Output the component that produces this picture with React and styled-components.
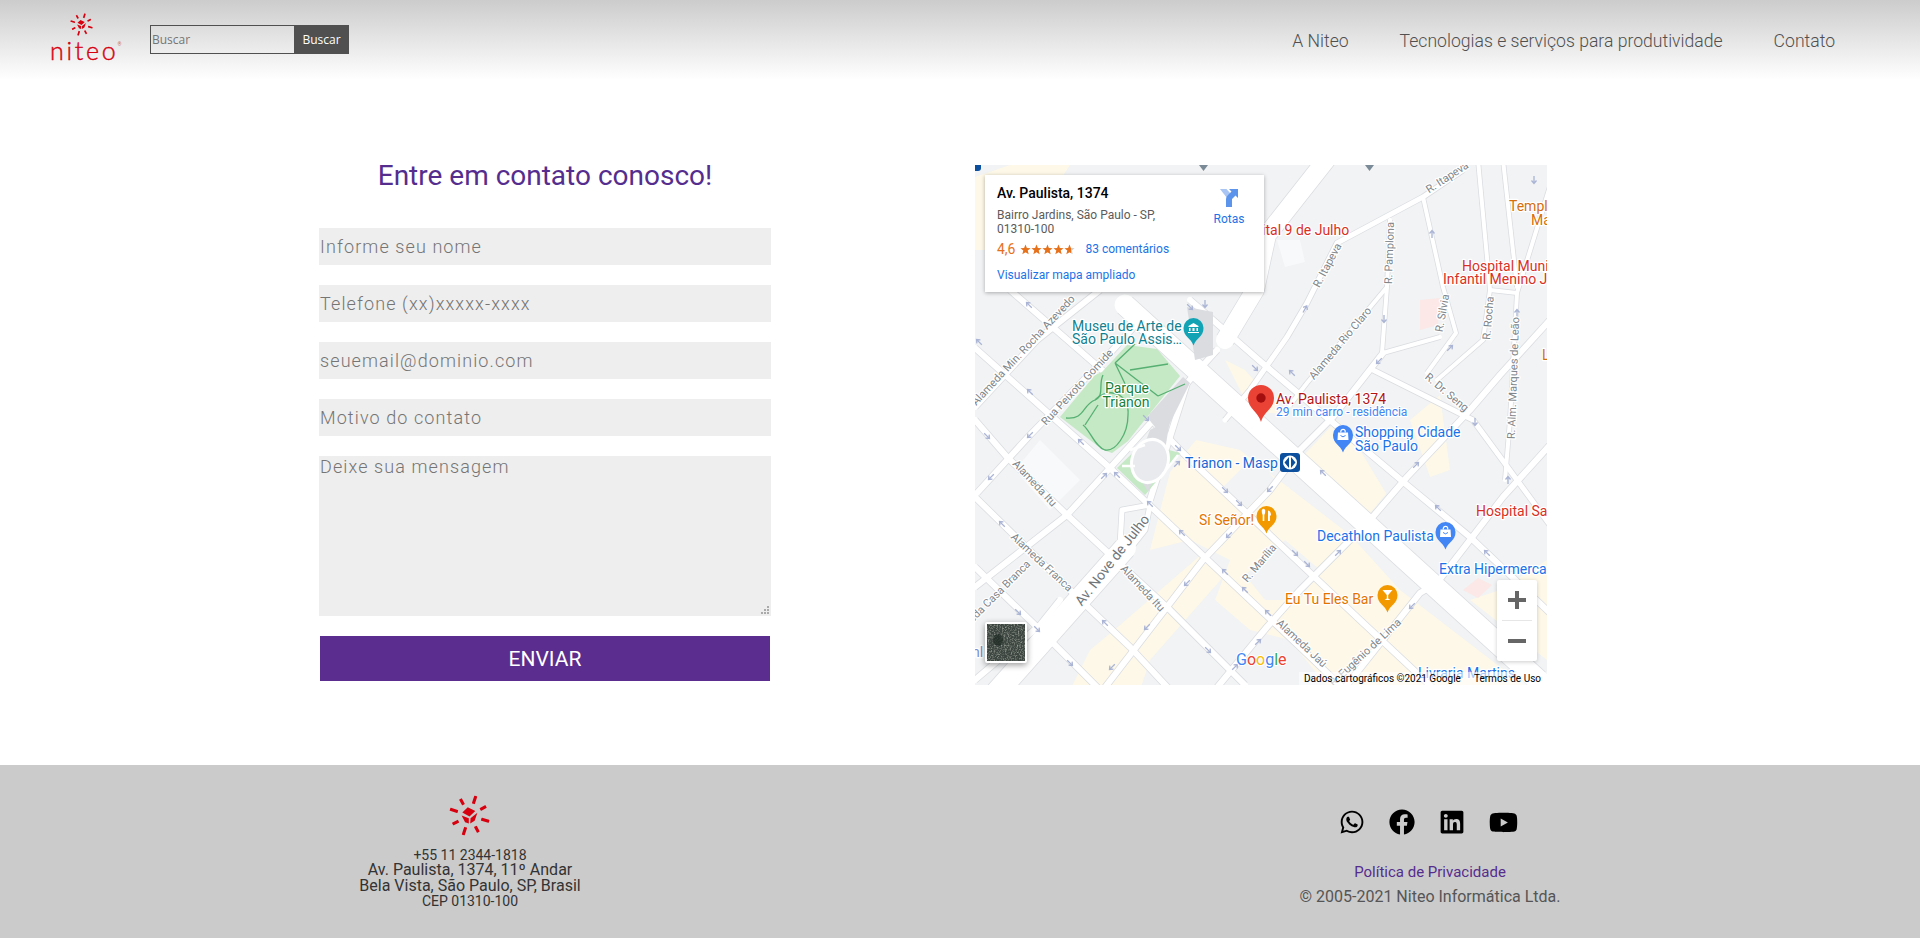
import React from "react";
import styled, { createGlobalStyle } from "styled-components";
import { FaWhatsapp, FaFacebook, FaLinkedin, FaYoutube } from "react-icons/fa";

const GlobalStyle = createGlobalStyle`
  html, body { margin: 0; padding: 0; background: #fff; }
  body { font-family: Roboto, "Liberation Sans", sans-serif; overflow: hidden; }
  * { box-sizing: border-box; }
`;

const Header = styled.header`
  height: 80px;
  display: flex;
  align-items: flex-start;
  justify-content: space-between;
  padding: 13px 85px 0 50px;
  background: linear-gradient(#cccccc, #ffffff);
`;
const Brand = styled.div`
  display: flex;
  align-items: flex-start;
`;
const Logo = styled.a`
  width: 70px;
  display: flex;
  flex-direction: column;
  align-items: flex-start;
  margin-right: 30px;
  color: #d7000f;
`;
const LogoSun = styled.div`
  display: flex;
  margin-left: 20px;
`;
const Wordmark = styled.span`
  font: 300 25px/20px Lato, Roboto, sans-serif;
  letter-spacing: 2.7px;
  margin-top: 4px;
  -webkit-text-stroke: 0.4px #d7000f;
  position: relative;
  white-space: nowrap;
`;
const Registered = styled.sup`
  position: absolute;
  top: 2px;
  right: -3px;
  font: 400 5px/5px Roboto, sans-serif;
  letter-spacing: 0;
  -webkit-text-stroke: 0;
  color: #c66;
`;
const SearchForm = styled.form`
  display: flex;
  margin-top: 12px;
`;
const SearchInput = styled.input`
  width: 144px;
  height: 29px;
  border: 1px solid #505050;
  border-right: 0;
  padding: 0 1px;
  background: transparent;
  font: 400 12px "Open Sans", sans-serif;
  color: #333;
  outline: 0;
  &::placeholder { color: #757575; opacity: 1; }
`;
const SearchButton = styled.button`
  width: 55px;
  height: 29px;
  border: 0;
  padding: 0;
  background: #505050;
  color: #fff;
  font: 400 12px "Open Sans", sans-serif;
`;
const Nav = styled.nav`
  display: flex;
  gap: 51px;
  padding-top: 16px;
`;
const NavItem = styled.a`
  font: 300 17.6px/24px Roboto, sans-serif;
  color: #505050;
  white-space: nowrap;
`;

const Main = styled.main`
  height: 685px;
  display: flex;
  align-items: flex-start;
  gap: 204px;
  padding: 76px 0 0 319px;
`;
const ContactForm = styled.form`
  width: 452px;
  display: flex;
  flex-direction: column;
`;
const Title = styled.h1`
  margin: 0 0 32px;
  font: 400 28px/40px Roboto, sans-serif;
  color: #552d8e;
  text-align: center;
`;
const Field = styled.input`
  display: block;
  width: 100%;
  height: 37px;
  margin-bottom: 20px;
  border: 0;
  padding: 0 1px;
  background: #eeeeee;
  font: 300 18px Roboto, sans-serif;
  letter-spacing: 1.1px;
  outline: 0;
  &::placeholder { color: #757575; opacity: 1; }
`;
const Message = styled.textarea`
  display: block;
  width: 100%;
  height: 160px;
  margin-bottom: 20px;
  border: 0;
  padding: 0 1px;
  background: #eeeeee;
  font: 300 18px/21px Roboto, sans-serif;
  letter-spacing: 1.1px;
  outline: 0;
  &::placeholder { color: #757575; opacity: 1; }
  &::-webkit-resizer {
    background: url("data:image/svg+xml,%3Csvg xmlns='http://www.w3.org/2000/svg' width='15' height='15'%3E%3Cg fill='%23aaa'%3E%3Crect x='11' y='5' width='2' height='2'/%3E%3Crect x='8' y='8' width='2' height='2'/%3E%3Crect x='11' y='8' width='2' height='2'/%3E%3Crect x='5' y='11' width='2' height='2'/%3E%3Crect x='8' y='11' width='2' height='2'/%3E%3Crect x='11' y='11' width='2' height='2'/%3E%3C/g%3E%3C/svg%3E") no-repeat;
  }
`;
const SendButton = styled.button`
  align-self: center;
  width: 450px;
  height: 45px;
  border: 0;
  background: #5b2d8e;
  color: #fff;
  font: 400 21px Roboto, sans-serif;
`;

const MapFrame = styled.div`
  position: relative;
  width: 572px;
  height: 520px;
  margin-top: 9px;
  overflow: hidden;
  background: #f1f3f4;
  svg.canvas { display: block; }
`;
const Label = styled.text`
  font-family: Roboto, sans-serif;
  font-size: ${(p) => p.$size || 14}px;
  fill: ${(p) => p.$color || "#80868b"};
  stroke: #fff;
  stroke-width: ${(p) => p.$halo || 2.5}px;
  stroke-linejoin: round;
  paint-order: stroke;
`;
const RoadCasing = styled.polyline`
  fill: none;
  stroke: #dadce0;
  stroke-linejoin: round;
`;
const RoadFill = styled.polyline`
  fill: none;
  stroke: #ffffff;
  stroke-linejoin: round;
  stroke-linecap: round;
`;
const OneWay = styled.path`
  fill: none;
  stroke: #aab4d4;
  stroke-width: 1.3;
`;
const GooglePart = styled.tspan`
  fill: ${(p) => p.$color};
`;

const InfoCard = styled.div`
  position: absolute;
  left: 10px;
  top: 10px;
  width: 279px;
  height: 117px;
  display: flex;
  justify-content: space-between;
  padding: 10px 10px 0 12px;
  background: #fff;
  box-shadow: 0 1px 4px rgba(0, 0, 0, 0.3);
`;
const CardTitle = styled.div`
  font: 500 14px/16px Roboto, sans-serif;
  color: #000;
`;
const CardAddress = styled.div`
  width: 190px;
  margin-top: 7px;
  font: 400 12px/14px Roboto, sans-serif;
  color: #5b5b5b;
`;
const Rating = styled.div`
  display: flex;
  align-items: center;
  margin-top: 6px;
  font: 400 12px/14px Roboto, sans-serif;
`;
const Score = styled.span`
  font-size: 14px;
  color: #e7711b;
  margin-right: 4px;
`;
const CardLink = styled.a`
  display: block;
  font: 400 12px/14px Roboto, sans-serif;
  color: #1a73e8;
  margin: ${(p) => p.$margin || "0"};
`;
const Directions = styled.div`
  width: 50px;
  display: flex;
  flex-direction: column;
  align-items: center;
  padding-top: 3px;
  gap: 5px;
`;
const ZoomControl = styled.div`
  position: absolute;
  right: 10px;
  bottom: 24px;
  width: 40px;
  height: 81px;
  background: #fff;
  border-radius: 2px;
  box-shadow: 0 1px 4px rgba(0, 0, 0, 0.2);
  display: flex;
  flex-direction: column;
  align-items: center;
`;
const ZoomButton = styled.div`
  flex: 1;
  display: flex;
  align-items: center;
  justify-content: center;
`;
const ZoomDivider = styled.div`
  width: 30px;
  height: 1px;
  background: #e6e6e6;
`;
const Thumb = styled.div`
  position: absolute;
  left: 10px;
  bottom: 22px;
  width: 42px;
  height: 41px;
  border: 2px solid #fff;
  border-radius: 2px;
  overflow: hidden;
  background: #3d4540;
  box-shadow: 0 2px 6px rgba(0, 0, 0, 0.4);
  svg { display: block; }
`;
const Attribution = styled.div`
  position: absolute;
  right: 0;
  bottom: 0;
  display: flex;
  gap: 13px;
  padding: 0 6px 0 5px;
  height: 13px;
  background: rgba(255, 255, 255, 0.6);
  font: 400 10px/13px Roboto, sans-serif;
  color: #000;
  white-space: nowrap;
`;

const Footer = styled.footer`
  height: 173px;
  display: flex;
  justify-content: space-between;
  padding: 30px 340px 0 320px;
  background: #cbcbcb;
`;
const Address = styled.div`
  width: 300px;
  display: flex;
  flex-direction: column;
  align-items: center;
  color: #333;
  text-align: center;
`;
const AddressLine = styled.div`
  font: 400 ${(p) => (p.$small ? 14 : 16)}px/${(p) => (p.$small ? 14 : 16)}px Roboto, sans-serif;
  white-space: nowrap;
`;
const FooterMark = styled.div`
  height: 43px;
  margin: 0 2px 10px 0;
  display: flex;
`;
const FooterRight = styled.div`
  width: 300px;
  display: flex;
  flex-direction: column;
  align-items: center;
  padding-top: 14px;
`;
const Socials = styled.div`
  display: flex;
  align-items: center;
  gap: 24px;
  height: 26px;
  margin: 0 3px 27px 0;
  color: #000;
`;
const PrivacyLink = styled.a`
  font: 400 15px/20px Roboto, sans-serif;
  color: #552d8e;
`;
const Copyright = styled.div`
  margin-top: 5px;
  font: 400 16px/20px Roboto, sans-serif;
  color: #555;
  white-space: nowrap;
`;

const longRays = [18, -72, -162, 107];
const shortRays = [-29, -117, 152, 61];

function SunMark({ size }) {
  return (
    <svg width={size} height={size} viewBox="-20 -20 40 40" fill="#d7000f">
      {longRays.map((a) => (
        <rect key={a} x="-1.5" y="-20" width="3" height="8" rx="0.5" transform={`rotate(${a})`} />
      ))}
      {shortRays.map((a) => (
        <rect key={a} x="-1.5" y="-18.5" width="3" height="6.5" rx="0.5" transform={`rotate(${a})`} />
      ))}
      <path d="M-7 -3 L-1.7 -8 L5.7 -4.3 L0 1 Z" />
      <path d="M1 2.7 L7.7 -2.7 L5 5 L0.7 7.7 Z" />
      <path d="M-7.7 0 L-0.7 2.7 L-0.7 7.7 L-4.3 6.7 Z" />
    </svg>
  );
}

// roads in page coordinates, the svg viewBox starts at the map corner
const roads = [
  [6, "975,348 1110,468 1300,647 1345,690"],
  [6, "975,420 1007,457 1067,515 1170,610 1245,685"],
  [6, "975,497 1070,590 1130,647 1170,690"],
  [6, "975,567 1040,630 1100,690"],
  [6, "1010,290 1110,377 1183,453 1360,620 1435,690"],
  [6, "1190,300 1261,362 1407,485 1470,537 1550,613"],
  [5, "1373,370 1473,420 1550,525"],
  [6, "975,407 1037,340 1100,290"],
  [6, "977,493 1030,435 1110,353 1140,320"],
  [6, "975,587 1067,515 1110,468 1187,383 1217,350"],
  [6, "975,680 1040,625 1060,600"],
  [6, "1103,690 1167,607 1203,560 1270,490 1300,450 1333,417 1383,353"],
  [6, "1215,690 1267,627 1300,590 1370,520 1407,477 1470,410 1500,375 1550,320"],
  [6, "1343,690 1420,593 1437,583 1503,497 1550,445"],
  [5, "1463,170 1423,197 1337,243 1307,303 1287,337 1250,390 1225,420"],
  [4, "1390,220 1387,287 1382,353"],
  [4, "1387,287 1307,383 1290,405"],
  [4, "1423,197 1443,287 1456,333 1427,373"],
  [4, "1440,337 1383,353"],
  [4, "1478,160 1490,290 1483,340 1437,380"],
  [4, "1503,160 1517,287"],
  [4, "1555,170 1517,293 1510,420 1505,480"],
  [4, "1490,290 1517,293"],
  [18, "1330,155 1267,235 1255,290 1225,340"],
  [6, "1150,500 1187,383"],
  [5, "1120,545 1122,510 1150,505 1145,530 1125,555"],
  [22, "990,700 1125,548"],
  [21, "1125,305 1560,700"],
];

const yellowAreas = [
  "1170,472 1196,440 1240,450 1350,535 1400,590 1530,690 1330,690 1290,640 1250,630 1215,600 1230,560 1190,540 1150,550",
  "1120,625 1203,553 1225,575 1150,660 1140,690 1070,690 1090,650",
  "1302,457 1337,420 1400,477 1367,517",
  "1410,420 1440,395 1450,470 1430,477",
  "1225,360 1245,370 1285,415 1250,410",
  "1470,600 1500,590 1547,560 1547,660",
  "975,177 1010,165 1070,165 1060,180 1010,250 975,250",
];
const greyBlocks = [
  "1245,575 1285,540 1320,570 1300,600 1265,600",
  "1220,490 1255,455 1275,480 1245,510",
  "1360,450 1395,430 1420,470 1390,500",
];

const arrows = [
  [1030, 392, -45], [1030, 435, -135], [987, 436, 135], [991, 477, -135], [1081, 442, -45], [1104, 476, 45],
  [1117, 475, -45], [1146, 418, 135], [1178, 448, 135], [1177, 464, 45], [1150, 504, -45], [1182, 533, -45],
  [1187, 583, -135], [1147, 627, -135], [1112, 667, -135], [1105, 623, -45], [1070, 663, 135], [1037, 629, 135],
  [1018, 612, 135], [1002, 524, -45], [1229, 535, -135], [1225, 572, -45], [1245, 590, -45], [1268, 613, -45],
  [1225, 490, 135], [1239, 503, 135], [1270, 489, -135], [1255, 368, 135], [1292, 373, -45], [1208, 650, 135],
  [1258, 642, 45], [1235, 667, 45], [1295, 553, 135], [1475, 422, 180], [1508, 480, 0], [1438, 508, -45],
  [1416, 465, 45], [1323, 473, -45], [1307, 564, 135], [1338, 553, 45], [1412, 606, -135], [1487, 553, -45],
  [1432, 234, 0], [1305, 309, 30], [1384, 319, 180], [1379, 361, -135], [1450, 348, 45], [1517, 313, 0],
  [1534, 180, 180], [1029, 305, -45], [979, 342, -45], [1190, 307, 135], [1205, 304, 180],
];

const streetLabels = [
  ["R. Itapeva", 1447, 177, -33],
  ["R. Itapeva", 1327, 265, -62],
  ["R. Pamplona", 1389, 253, -88],
  ["Alameda Rio Claro", 1340, 343, -50],
  ["R. Silvia", 1442, 313, -80],
  ["R. Rocha", 1488, 318, -85],
  ["R. Alm. Marques de Leão", 1513, 378, -88],
  ["R. Dr. Seng", 1447, 392, 40],
  ["Alameda Min. Rocha Azevedo", 1023, 350, -47],
  ["Rua Peixoto Gomide", 1077, 387, -47],
  ["Alameda Itu", 1035, 483, 47],
  ["Alameda Franca", 1042, 562, 43],
  ["Alameda Casa Branca", 990, 600, -45],
  ["Alameda Itu", 1143, 588, 47],
  ["R. Marília", 1259, 563, -50],
  ["Alameda Jaú", 1302, 643, 43],
  ["R. Eugênio de Lima", 1365, 652, -43],
];

const placeLabels = [
  ["Museu de Arte de", 1072, 331, "#12808f"],
  ["São Paulo Assis…", 1072, 344, "#12808f"],
  ["Trianon - Masp", 1185, 468, "#1967d2"],
  ["Sí Señor!", 1199, 525, "#e37400"],
  ["Shopping Cidade", 1355, 437, "#1a73e8"],
  ["São Paulo", 1355, 451, "#1a73e8"],
  ["Decathlon Paulista", 1317, 541, "#1a73e8"],
  ["Extra Hipermercado", 1439, 574, "#1a73e8"],
  ["Eu Tu Eles Bar", 1285, 604, "#e37400"],
  ["Hospital Santa", 1476, 516, "#d93025"],
  ["Hospital Municipal", 1462, 271, "#d93025"],
  ["Infantil Menino Jesus", 1443, 284, "#d93025"],
  ["Hospital 9 de Julho", 1229, 235, "#d93025"],
  ["Templo", 1509, 211, "#d56e0c"],
  ["Ma", 1531, 225, "#d56e0c"],
  ["L", 1542, 360, "#d56e0c"],
  ["Livraria Martins", 1418, 678, "#1a73e8"],
  ["Unl", 963, 657, "#7a8fd0"],
];

const glyphs = {
  museum: <path d="M-5 -2 L0 -5 L5 -2 V-1 H-5Z M-4.5 0 H-3 V3 H-4.5Z M-1 0 H1 V3 H-1Z M3 0 H4.5 V3 H3Z M-5.5 4 H5.5 V5 H-5.5Z" fill="#fff" />,
  bag: (
    <>
      <path d="M-5 -2.5 H5 L5.5 5 H-5.5 Z" fill="#fff" />
      <path d="M-2.2 -2.5 V-3.5 A2.2 2.2 0 0 1 2.2 -3.5 V-2.5" fill="none" stroke="#fff" strokeWidth="1.2" />
      <path d="M-2.5 0.5 Q0 3.2 2.5 0.5" fill="none" stroke="#4285f4" strokeWidth="1" />
    </>
  ),
  food: <path d="M-4.8 -5.5 A2 3 0 0 1 -1.2 -5.5 Q-1.2 -2 -2.2 -1 V5 H-3.8 V-1 Q-4.8 -2 -4.8 -5.5Z M1.5 -5.5 Q4.5 -5 4.5 -0.5 H3.4 V5 H1.5Z" fill="#fff" />,
  glass: <path d="M-5 -5 H5 L0.7 0 V3.5 L3 5 H-3 L-0.7 3.5 V0 Z" fill="#fff" />,
};

const pins = [
  [1193.5, 318, "#12a3b5", "museum"],
  [1343, 425, "#4285f4", "bag"],
  [1445.5, 522, "#4285f4", "bag"],
  [1266.5, 506, "#f29900", "food"],
  [1387.5, 585, "#f29900", "glass"],
];

function Pin({ cx, top, color, glyph }) {
  const r = 10;
  return (
    <g transform={`translate(${cx} ${top + r})`}>
      <path d={`M${-r} 0 A${r} ${r} 0 1 1 ${r} 0 C${r} ${r * 0.9} ${r * 0.25} ${r} 0 ${r * 1.75} C${-r * 0.25} ${r} ${-r} ${r * 0.9} ${-r} 0 Z`} fill={color} />
      {glyphs[glyph]}
    </g>
  );
}

function MapDrawing() {
  return (
    <svg className="canvas" width="572" height="520" viewBox="975 165 572 520">
      <rect x="975" y="165" width="572" height="520" fill="#f1f3f4" />
      {yellowAreas.map((p) => (
        <polygon key={p} points={p} fill="#fef8e8" />
      ))}
      {greyBlocks.map((p) => (
        <polygon key={p} points={p} fill="#f1f3f4" />
      ))}
      <polygon points="1015,470 1040,440 1080,480 1050,510" fill="#f8f9fa" />
      <polygon points="1277,240 1300,240 1305,262 1285,267" fill="#f8f9fa" />
      <polygon points="1420,300 1440,298 1438,325 1420,330" fill="#fce8e6" />
      <polygon points="1463,590 1478,578 1492,585 1478,598" fill="#fce8e6" />
      {roads.map(([w, pts]) => (
        <RoadCasing key={"c" + pts} points={pts} strokeWidth={w + 1.5} />
      ))}
      {roads.map(([w, pts]) => (
        <RoadFill key={pts} points={pts} strokeWidth={w} />
      ))}
      <polygon points="1187,307 1213,312 1213,355 1195,360" fill="#dadce0" />
      <polygon points="1147,417 1183,377 1190,383 1163,437" fill="#dadce0" />

      <polygon points="1060,417 1095,375 1102,372 1127,345 1157,349 1180,376 1147,417 1128,441 1112,453 1103,450" fill="#c5e8c5" />
      <g fill="none" stroke="#55b072" strokeWidth="1.3">
        <path d="M1066,418 C1085,420 1082,405 1095,400 C1105,395 1098,385 1103,375" />
        <path d="M1095,400 C1110,385 1130,395 1128,415 C1128,435 1115,452 1105,450 C1095,447 1090,430 1083,425" />
        <path d="M1115,363 L1135,344 M1115,363 L1128,390 M1115,363 L1158,396 M1158,396 L1185,384 M1130,370 L1168,364" />
        <path d="M1085,425 L1098,405" />
      </g>
      <polygon points="1117,468 1143,443 1180,453 1145,495" fill="#c5e8c5" />
      <polygon points="1135,470 1150,430 1170,420 1165,450 1148,492" fill="#dadce0" />
      <ellipse cx="1150" cy="461" rx="18" ry="22" fill="#e8eaed" stroke="#fff" strokeWidth="3" transform="rotate(20 1150 461)" />
      <path d="M1122,466 L1135,466 M1158,480 L1178,455 M1130,450 L1145,445" stroke="#fff" strokeWidth="2.5" fill="none" />

      {arrows.map(([x, y, a]) => (
        <OneWay key={`${x}-${y}`} d="M0 4V-3M-2.5 -0.5L0 -3.5L2.5 -0.5" transform={`translate(${x} ${y}) rotate(${a})`} />
      ))}

      {streetLabels.map(([t, x, y, a]) => (
        <Label key={t + x} $size={11} x={x} y={y + 4} textAnchor="middle" transform={`rotate(${a} ${x} ${y})`}>
          {t}
        </Label>
      ))}
      <Label $size={14} $color="#70757a" x="1112" y="565" textAnchor="middle" transform="rotate(-52 1112 560)">
        Av. Nove de Julho
      </Label>
      <Label $color="#188038" x="1127" y="393" textAnchor="middle">Parque</Label>
      <Label $color="#188038" x="1126" y="407" textAnchor="middle">Trianon</Label>

      {placeLabels.map(([t, x, y, c]) => (
        <Label key={t} $color={c} x={x} y={y}>
          {t}
        </Label>
      ))}
      <Label $color="#b31412" x="1276" y="404">Av. Paulista, 1374</Label>
      <Label $size={12} $color="#4285f4" x="1276" y="416">29 min carro - residência</Label>

      {pins.map(([cx, top, c, g]) => (
        <Pin key={cx} cx={cx} top={top} color={c} glyph={g} />
      ))}
      <g transform="translate(1261 398)">
        <path d="M-13 0 A13 13 0 1 1 13 0 C13 11 3 13 0 24 C-3 13 -13 11 -13 0 Z" fill="#ea4335" />
        <circle r="4.7" fill="#a50e0e" />
      </g>
      <g transform="translate(1280 453)">
        <rect width="20" height="19" rx="3" fill="#0b4f9e" />
        <circle cx="10" cy="9.5" r="7" fill="#fff" />
        <path d="M9 4 L4.5 9.5 L9 15 Z M11 4 L15.5 9.5 L11 15 Z" fill="#0b4f9e" />
      </g>
      <rect x="972" y="162" width="9" height="9" rx="3" fill="#0b4f9e" />
      <path d="M1199 165 H1208 L1203.5 171 Z" fill="#7b8a97" />
      <path d="M1365 165 H1374 L1369.5 171 Z" fill="#7b8a97" />

      <Label $size={16} x="1236" y="665" $halo={2}>
        <GooglePart $color="#4285f4">G</GooglePart>
        <GooglePart $color="#ea4335">o</GooglePart>
        <GooglePart $color="#fbbc05">o</GooglePart>
        <GooglePart $color="#4285f4">g</GooglePart>
        <GooglePart $color="#34a853">l</GooglePart>
        <GooglePart $color="#ea4335">e</GooglePart>
      </Label>
    </svg>
  );
}

function Stars() {
  const star = "M5.5 0.5 L6.9 4 L10.6 4.2 L7.7 6.6 L8.7 10.2 L5.5 8.2 L2.3 10.2 L3.3 6.6 L0.4 4.2 L4.1 4 Z";
  return (
    <svg width="55" height="11" viewBox="0 0 55 11">
      <defs>
        <linearGradient id="partStar">
          <stop offset="60%" stopColor="#e7711b" />
          <stop offset="60%" stopColor="#cccccc" />
        </linearGradient>
      </defs>
      {[0, 11, 22, 33].map((x) => (
        <path key={x} d={star} fill="#e7711b" transform={`translate(${x} 0)`} />
      ))}
      <path d={star} fill="url(#partStar)" transform="translate(44 0)" />
    </svg>
  );
}

function DirectionsIcon() {
  return (
    <svg width="18" height="19" viewBox="0 0 18 19">
      <path d="M0 1H6.5L11 6L7 10Z" fill="#a9c5f4" />
      <path d="M6 19V11Q6 9 8 7L11.5 3.5L9 1H18V10L15.5 7.5L12 11V19Z" fill="#5b94ea" />
    </svg>
  );
}

function SatelliteNoise() {
  return (
    <svg width="38" height="37" viewBox="0 0 38 37">
      <filter id="sat">
        <feTurbulence type="fractalNoise" baseFrequency="0.7" numOctaves="2" seed="4" />
        <feColorMatrix values="0 0 0 0 0.62  0 0 0 0 0.66  0 0 0 0 0.6  0 0 0 1.6 -0.72" />
      </filter>
      <rect width="38" height="37" filter="url(#sat)" />
      <ellipse cx="11" cy="16" rx="5" ry="6" fill="#1c2a22" opacity="0.7" />
    </svg>
  );
}

export default function App() {
  return (
    <>
      <GlobalStyle />
      <Header>
        <Brand>
          <Logo>
            <LogoSun>
              <SunMark size={23} />
            </LogoSun>
            <Wordmark>
              niteo<Registered>®</Registered>
            </Wordmark>
          </Logo>
          <SearchForm>
            <SearchInput placeholder="Buscar" />
            <SearchButton type="button">Buscar</SearchButton>
          </SearchForm>
        </Brand>
        <Nav>
          <NavItem>A Niteo</NavItem>
          <NavItem>Tecnologias e serviços para produtividade</NavItem>
          <NavItem>Contato</NavItem>
        </Nav>
      </Header>

      <Main>
        <ContactForm>
          <Title>Entre em contato conosco!</Title>
          <Field placeholder="Informe seu nome" />
          <Field placeholder="Telefone (xx)xxxxx-xxxx" />
          <Field placeholder="seuemail@dominio.com" />
          <Field placeholder="Motivo do contato" />
          <Message placeholder="Deixe sua mensagem" />
          <SendButton type="button">ENVIAR</SendButton>
        </ContactForm>

        <MapFrame>
          <MapDrawing />
          <InfoCard>
            <div>
              <CardTitle>Av. Paulista, 1374</CardTitle>
              <CardAddress>Bairro Jardins, São Paulo - SP, 01310-100</CardAddress>
              <Rating>
                <Score>4,6</Score>
                <Stars />
                <CardLink $margin="0 0 0 11px">83 comentários</CardLink>
              </Rating>
              <CardLink $margin="12px 0 0">Visualizar mapa ampliado</CardLink>
            </div>
            <Directions>
              <DirectionsIcon />
              <CardLink>Rotas</CardLink>
            </Directions>
          </InfoCard>
          <Thumb>
            <SatelliteNoise />
          </Thumb>
          <ZoomControl>
            <ZoomButton>
              <svg width="18" height="18" viewBox="0 0 18 18">
                <path d="M7 0h4v7h7v4h-7v7H7v-7H0V7h7z" fill="#666" />
              </svg>
            </ZoomButton>
            <ZoomDivider />
            <ZoomButton>
              <svg width="18" height="18" viewBox="0 0 18 18">
                <path d="M0 7h18v4H0z" fill="#666" />
              </svg>
            </ZoomButton>
          </ZoomControl>
          <Attribution>
            <span>Dados cartográficos ©2021 Google</span>
            <span>Termos de Uso</span>
          </Attribution>
        </MapFrame>
      </Main>

      <Footer>
        <Address>
          <FooterMark>
            <SunMark size={41} />
          </FooterMark>
          <AddressLine $small>+55 11 2344-1818</AddressLine>
          <AddressLine>Av. Paulista, 1374, 11º Andar</AddressLine>
          <AddressLine>Bela Vista, São Paulo, SP, Brasil</AddressLine>
          <AddressLine $small>CEP 01310-100</AddressLine>
        </Address>
        <FooterRight>
          <Socials>
            <FaWhatsapp size={26} />
            <FaFacebook size={26} />
            <FaLinkedin size={26} />
            <FaYoutube size={29} />
          </Socials>
          <PrivacyLink>Política de Privacidade</PrivacyLink>
          <Copyright>© 2005-2021 Niteo Informática Ltda.</Copyright>
        </FooterRight>
      </Footer>
    </>
  );
}
